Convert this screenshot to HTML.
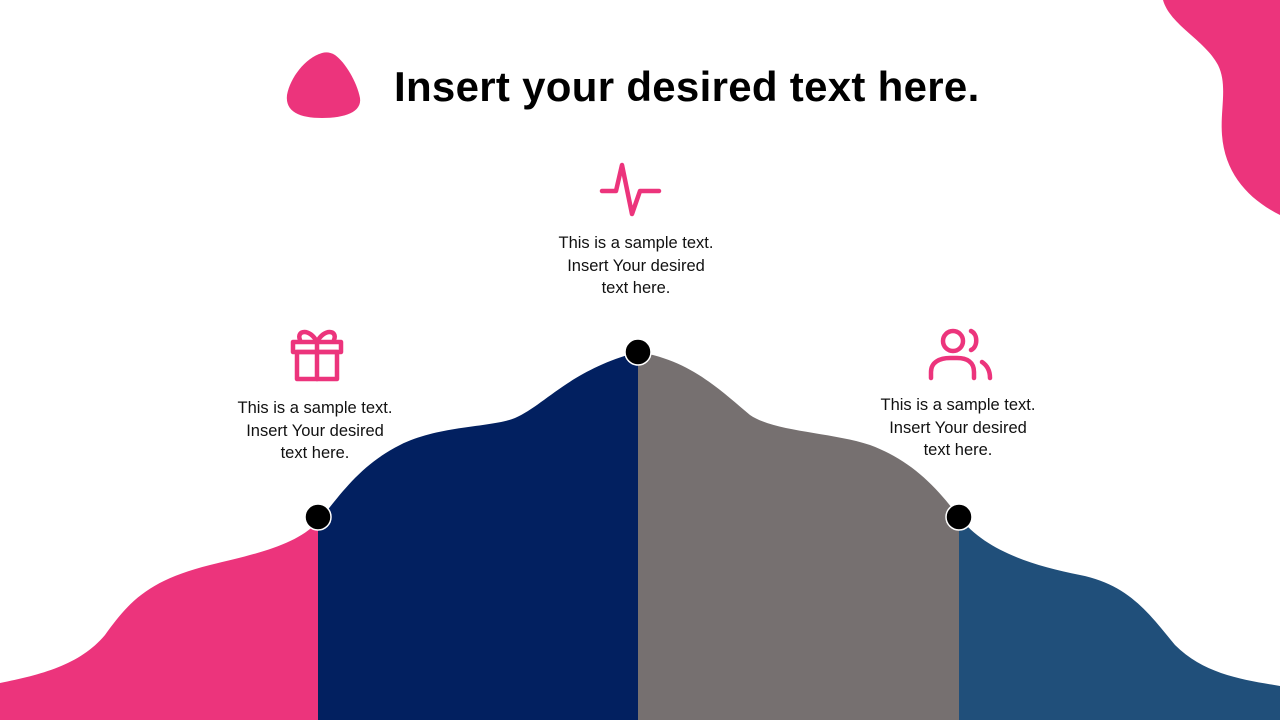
<!DOCTYPE html>
<html><head><meta charset="utf-8"><style>
body{margin:0;width:1280px;height:720px;overflow:hidden;background:#fff;position:relative;font-family:"Liberation Sans",sans-serif}
.t{position:absolute;font-size:16.5px;line-height:22.5px;color:#111;text-align:center;width:240px}
h1{position:absolute;left:394px;top:63px;margin:0;font-size:42px;font-weight:bold;color:#000;white-space:nowrap;letter-spacing:0.3px}
</style></head><body>
<svg width="1280" height="720" style="position:absolute;left:0;top:0">
<path d="M1163,0 C1170,25 1205,40 1218,65 C1228,85 1220,110 1222,135 C1225,175 1250,200 1280,215 L1280,0 Z" fill="#EC347C"/>
<path d="M322,53 C305,58 290,78 287,95 C285,112 300,118 322,118 C345,118 362,112 360,98 C357,82 345,62 335,55 C330,52 326,52 322,53 Z" fill="#EC347C"/>
<path d="M0,683 C40,675 80,665 105,635 C130,600 150,580 210,565 C260,553 295,545 318,522 L318,720 L0,720 Z" fill="#EC347C"/>
<path d="M318,522 C340,495 360,465 400,445 C440,425 490,428 515,418 C545,405 570,370 638,352 L638,720 L318,720 Z" fill="#022060"/>
<path d="M638,352 C690,360 720,390 750,415 C775,432 830,432 870,445 C910,460 935,485 959,517 L959,720 L638,720 Z" fill="#767070"/>
<path d="M959,517 C985,550 1030,565 1080,575 C1130,585 1150,615 1175,645 C1205,675 1245,680 1280,686 L1280,720 L959,720 Z" fill="#204F7A"/>
<g stroke="#fff" stroke-width="1.5" fill="#000"><circle cx="318" cy="517" r="13"/><circle cx="638" cy="352" r="13"/><circle cx="959" cy="517" r="13"/></g>
<g fill="none" stroke="#EC347C" stroke-width="4.5" stroke-linecap="round" stroke-linejoin="round">
<path d="M602,191 L616,191 L622,165 L632,214 L640,191 L659,191"/>
<rect x="293" y="342" width="48" height="10"/>
<rect x="297" y="352" width="40" height="27"/>
<path d="M317,342 L317,379 M317,342 C310,328 296,330 300,340 M317,342 C324,328 338,330 334,340"/>
<circle cx="953" cy="341" r="10"/>
<path d="M931,378 L931,372 C931,362 940,358 950,358 L957,358 C967,358 974,362 974,372 L974,378"/>
<path d="M971,331 C978,334 978,347 971,350 M982,362 C988,366 990,372 990,378"/>
</g>
</svg>
<h1>Insert your desired text here.</h1>
<div class="t" style="left:516px;top:232px">This is a sample text.<br>Insert Your desired<br>text here.</div>
<div class="t" style="left:195px;top:397px">This is a sample text.<br>Insert Your desired<br>text here.</div>
<div class="t" style="left:838px;top:394px">This is a sample text.<br>Insert Your desired<br>text here.</div>
</body></html>
